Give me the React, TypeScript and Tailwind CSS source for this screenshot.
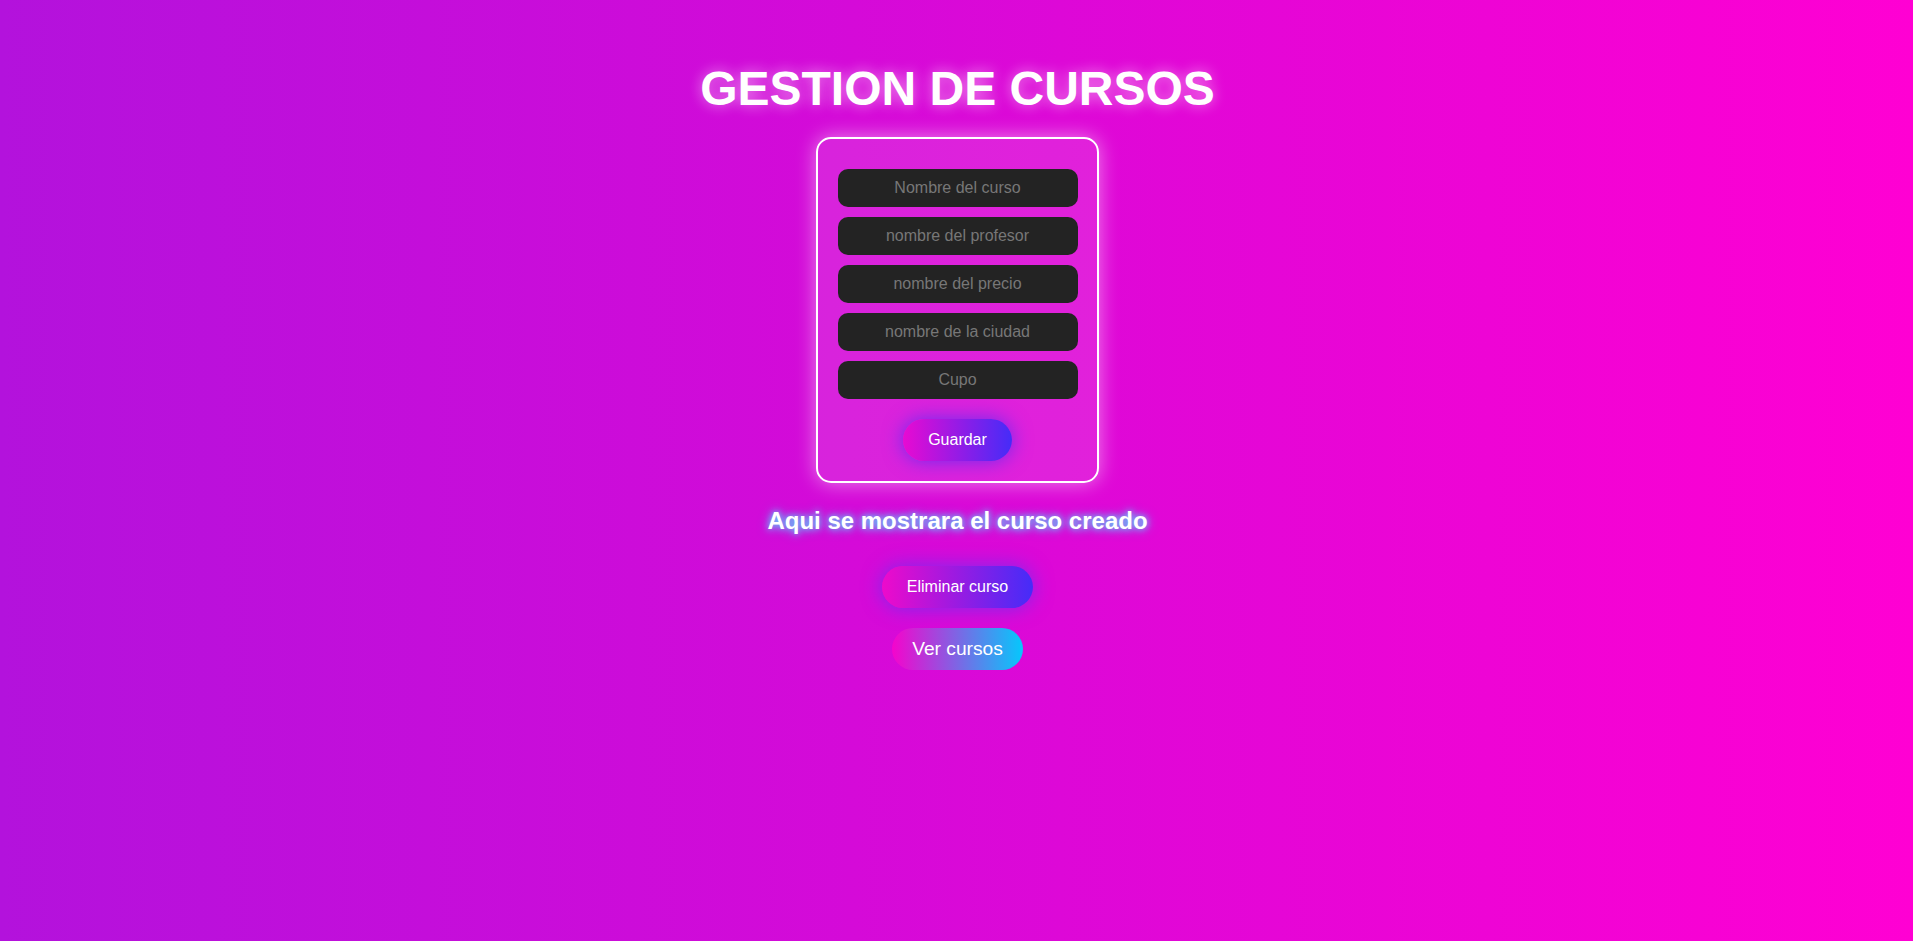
import React from "react";

export default function App() {
  const fields = [
    "Nombre del curso",
    "nombre del profesor",
    "nombre del precio",
    "nombre de la ciudad",
    "Cupo",
  ];
  return (
    <div className="min-h-screen w-full flex flex-col items-center bg-[linear-gradient(to_right,#b312dc,#ff00d3)] font-['Liberation_Sans',Arial,sans-serif]">
      <h1 className="mt-[61px] ml-[2px] text-[48px] leading-[55px] font-bold text-white [text-shadow:0_0_14px_rgba(255,255,255,0.55)]">
        GESTION DE CURSOS
      </h1>
      <div className="mt-[21px] ml-[2px] w-[283px] border-2 border-white rounded-[15px] bg-white/10 shadow-[0_0_20px_rgba(255,255,255,0.5)] px-[19.5px] pt-5 pb-5 flex flex-col items-center">
        <div className="mt-[10px] flex flex-col gap-[10px]">
          {fields.map((f) => (
            <input
              key={f}
              type="text"
              placeholder={f}
              className="w-[240px] h-[38px] rounded-[10px] bg-[#232323] text-center text-[16px] text-white placeholder:text-[#777777] outline-none border-0"
            />
          ))}
        </div>
        <button className="mt-5 h-[42px] px-[25px] rounded-full bg-[linear-gradient(to_right,#e80ad2,#452cf8)] text-white text-[16px] leading-[18px] shadow-[0_0_20px_#6a2cf0]">
          Guardar
        </button>
      </div>
      <h2 className="mt-[24px] ml-[2px] text-[24px] leading-[28px] font-bold text-white [text-shadow:0_0_6px_#5fd8ff,0_0_12px_#4db8ff]">
        Aqui se mostrara el curso creado
      </h2>
      <button className="mt-[31px] ml-[2px] h-[42px] px-[25px] rounded-full bg-[linear-gradient(to_right,#ee0acb,#452cf8)] text-white text-[16px] leading-[18px] shadow-[0_0_20px_#7a2cee]">
        Eliminar curso
      </button>
      <button className="mt-[20px] ml-[2px] h-[42px] px-[20px] rounded-full bg-[linear-gradient(to_right,#f504cc,#05c8fc)] text-white text-[19.2px] leading-[22px]">
        Ver cursos
      </button>
    </div>
  );
}
